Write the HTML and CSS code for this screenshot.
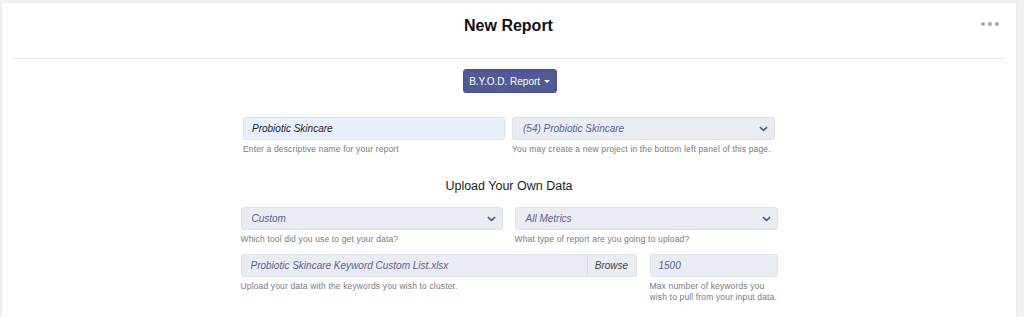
FILE: index.html
```html
<!DOCTYPE html>
<html lang="en">
<head>
    <meta charset="UTF-8">
    <title>New Report</title>
    <link rel="stylesheet" href="styles.css">
</head>
<body>
    <div class="card">
        <div class="header">
            <h1>New Report</h1>
            <span class="more"><i></i><i></i><i></i></span>
        </div>

        <div class="toolbar">
            <button class="btn-report">B.Y.O.D. Report <span class="caret"></span></button>
        </div>

        <div class="row row-name">
            <div class="field">
                <div class="control control-filled">Probiotic Skincare</div>
                <div class="help">Enter a descriptive name for your report</div>
            </div>
            <div class="field">
                <div class="control control-select">(54) Probiotic Skincare
                    <svg class="chev" viewBox="0 0 10 6" width="9" height="6"><path d="M1 1l4 3.5L9 1" fill="none" stroke="#4f5590" stroke-width="1.8"/></svg>
                </div>
                <div class="help">You may create a new project in the bottom left panel of this page.</div>
            </div>
        </div>

        <h2>Upload Your Own Data</h2>

        <div class="row row-source">
            <div class="field">
                <div class="control control-select">Custom
                    <svg class="chev" viewBox="0 0 10 6" width="9" height="6"><path d="M1 1l4 3.5L9 1" fill="none" stroke="#4f5590" stroke-width="1.8"/></svg>
                </div>
                <div class="help">Which tool did you use to get your data?</div>
            </div>
            <div class="field">
                <div class="control control-select">All Metrics
                    <svg class="chev" viewBox="0 0 10 6" width="9" height="6"><path d="M1 1l4 3.5L9 1" fill="none" stroke="#4f5590" stroke-width="1.8"/></svg>
                </div>
                <div class="help">What type of report are you going to upload?</div>
            </div>
        </div>

        <div class="row row-file">
            <div class="field">
                <div class="control control-file">
                    <span class="file-name">Probiotic Skincare Keyword Custom List.xlsx</span>
                    <span class="browse">Browse</span>
                </div>
                <div class="help">Upload your data with the keywords you wish to cluster.</div>
            </div>
            <div class="field">
                <div class="control">1500</div>
                <div class="help">Max number of keywords you<br>wish to pull from your input data.</div>
            </div>
        </div>
    </div>
</body>
</html>
```

FILE: styles.css
```css
* {
    margin: 0;
    padding: 0;
    box-sizing: border-box;
}

body {
    font-family: "Liberation Sans", Arial, sans-serif;
    background: #f1f1f1;
    padding: 3px 8px 0 2px;
    color: #222;
    height: 317px;
    overflow: hidden;
}

.card {
    background: #fff;
    height: 314px;
    box-shadow: 0 0 3px rgba(0,0,0,0.06);
}

.header {
    position: relative;
    height: 56px;
    margin: 0 12px 0 11px;
    border-bottom: 1px solid #e6e6e6;
    text-align: center;
}

.header h1 {
    font-size: 16px;
    font-weight: bold;
    line-height: 20px;
    padding-top: 13px;
    color: #111;
}

.more {
    position: absolute;
    right: 5px;
    top: 19px;
    display: flex;
    gap: 3px;
}

.more i {
    width: 4px;
    height: 4px;
    border-radius: 50%;
    background: #a1abbb;
}

.toolbar {
    text-align: center;
    padding-top: 10px;
}

.btn-report {
    width: 94px;
    height: 24px;
    background: #525a94;
    color: #fff;
    border: 1px solid #4a5188;
    border-radius: 3px;
    font-family: inherit;
    font-size: 10px;
    margin-left: 1px;
}

.caret {
    display: inline-block;
    width: 0;
    height: 0;
    border-left: 3px solid transparent;
    border-right: 3px solid transparent;
    border-top: 3px solid #fff;
    vertical-align: 2px;
    margin-left: 1px;
}

.row {
    display: grid;
    margin: 0 auto;
}

.row-name {
    width: 532px;
    grid-template-columns: 262px 263px;
    column-gap: 7px;
    margin-top: 24px;
}

.row-source {
    width: 537px;
    grid-template-columns: 262px 263px;
    column-gap: 12px;
    margin-top: 13px;
}

.row-file {
    width: 537px;
    grid-template-columns: 396px 128px;
    column-gap: 13px;
    margin-top: 9px;
}

.control {
    position: relative;
    height: 23px;
    background: #e9ecf3;
    border: 1px solid #dde1e9;
    border-radius: 3px;
    color: #5c6099;
    font-style: italic;
    font-size: 10px;
    line-height: 21px;
    padding-left: 8px;
    white-space: nowrap;
    overflow: hidden;
}

.control-select {
    padding-left: 10px;
}

.control-filled {
    background: #e8f0fe;
    color: #222;
}

.control-select .chev {
    position: absolute;
    right: 6px;
    top: 8px;
}

.control-file {
    display: flex;
    padding-left: 0;
}

.file-name {
    flex: 1;
    padding-left: 9px;
}

.browse {
    width: 49px;
    border-left: 1px solid #d7dbe3;
    color: #444;
    text-align: center;
}

.help {
    margin-top: 4px;
    font-size: 8.5px;
    letter-spacing: 0.15px;
    line-height: 11px;
    color: #7a7a7a;
}

h2 {
    margin-top: 23px;
    text-align: center;
    font-size: 12.5px;
    font-weight: normal;
    line-height: 16px;
    color: #1c1c1c;
}
```
